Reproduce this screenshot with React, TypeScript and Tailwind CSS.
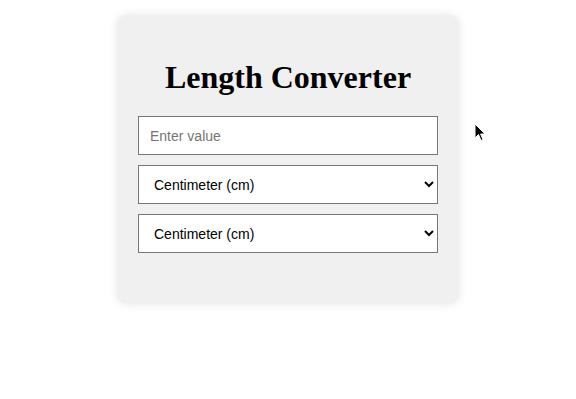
import React from "react";

const UNITS = ["Centimeter (cm)", "Meter (m)", "Kilometer (km)", "Inch (in)", "Foot (ft)"];

export default function App() {
  return (
    <div className="relative h-[399px] w-[576px] bg-white">
      <div className="flex justify-center pt-[15px]">
        <div className="w-[342px] rounded-[10px] bg-[#f0f0f0] px-[21px] pt-[22px] pb-[51px] shadow-[0_0_10px_rgba(0,0,0,0.1)]">
          <h1 className="mt-[22px] mb-[20px] text-center font-['Liberation_Serif',serif] text-[32px] font-bold leading-[37px] text-black">
            Length Converter
          </h1>
          <div className="flex flex-col gap-[10px] font-['Liberation_Sans',Arial,sans-serif] text-[14px]">
            <input
              type="number"
              placeholder="Enter value"
              className="h-[39px] w-full border border-[#767676] bg-white px-[11px] text-black outline-none placeholder:text-[#757575]"
            />
            <select className="h-[39px] w-full border border-[#767676] bg-white px-[11px] text-black outline-none">
              {UNITS.map((u) => (
                <option key={u}>{u}</option>
              ))}
            </select>
            <select className="h-[39px] w-full border border-[#767676] bg-white px-[11px] text-black outline-none">
              {UNITS.map((u) => (
                <option key={u}>{u}</option>
              ))}
            </select>
          </div>
        </div>
      </div>

      {/* mouse pointer in the capture */}
      <svg className="absolute left-[474px] top-[123px]" width="12" height="19" viewBox="0 0 12 19">
        <path d="M1 1 L1 15 L4.5 11.5 L7 17.5 L9 16.6 L6.6 11 L11 11 Z" fill="#000" stroke="#fff" strokeWidth="1" />
      </svg>
    </div>
  );
}
